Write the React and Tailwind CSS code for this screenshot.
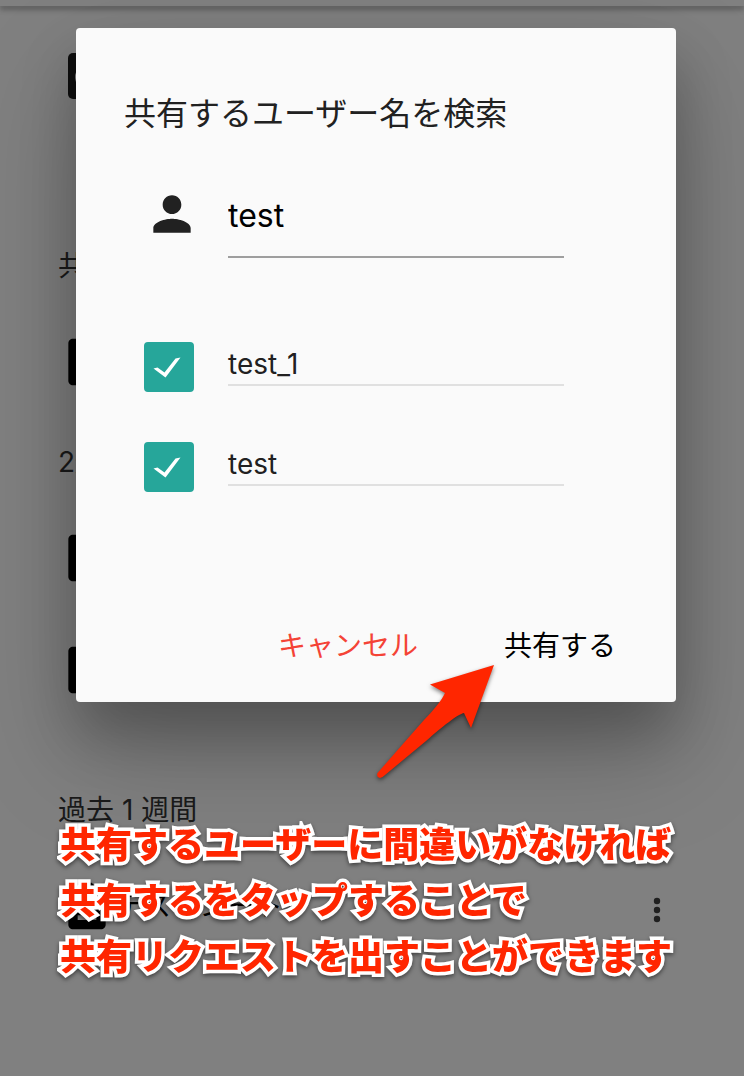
import React from "react";

function FileIcon({ variant }) {
  if (variant === "disc") {
    return (
      <svg viewBox="0 0 56 56" className="size-14 shrink-0" aria-hidden="true">
        <rect x="9" y="5" width="38" height="46" rx="5" fill="#0e0e0e" />
        <circle cx="28" cy="29" r="12" fill="#808080" />
      </svg>
    );
  }
  return (
    <svg viewBox="0 0 24 24" className="size-14 shrink-0" fill="#000" aria-hidden="true">
      <path d="M14 2H6c-1.100 0-1.990.9-1.990 2L4 20c0 1.100.89 2 1.990 2H18c1.100 0 2-.9 2-2V8l-6-6zm2 16H8v-2h8v2zm0-4H8v-2h8v2zm-3-5V3.500L18.500 9H13z" />
    </svg>
  );
}

function Row({ name, variant }) {
  return (
    <li className="flex h-28 items-center pr-[71px] pl-[59px]">
      <FileIcon variant={variant} />
      <span className="grow text-black">{name}</span>
      {name && (
        <button type="button" aria-label="メニュー" className="flex w-8 justify-center pt-2">
          <svg viewBox="0 0 8 28" className="h-7 w-2" fill="#1f1f1f">
            <circle cx="4" cy="5" r="3.2" />
            <circle cx="4" cy="14" r="3.2" />
            <circle cx="4" cy="23" r="3.2" />
          </svg>
        </button>
      )}
    </li>
  );
}

function Section({ title, rows, variant, className }) {
  return (
    <section className={className}>
      {title && <h2 className="flex h-20 items-center pl-[58px]">{title}</h2>}
      <ul>
        {rows.map((name, i) => (
          <Row key={i} name={name} variant={variant} />
        ))}
      </ul>
    </section>
  );
}

function UserOption({ id, name }) {
  return (
    <li className="flex h-[100px] items-center">
      <span className="relative ml-5 size-[50px] shrink-0">
        <input
          id={id}
          type="checkbox"
          defaultChecked
          className="block size-full appearance-none rounded-[4px] border-2 border-[#757575] checked:border-[#26a69a] checked:bg-[#26a69a]"
        />
        <svg viewBox="0 0 50 50" className="pointer-events-none absolute inset-0 size-full" aria-hidden="true">
          <path d="M9.500 26.500 L13.500 25.500 L20.500 30.500 L31.500 16.500 L36.500 15.500 L21.500 35.500Z" fill="#fff" />
        </svg>
      </span>
      <label htmlFor={id} className="ml-[34px] grow border-b-2 border-[#e0e0e0] pb-1 text-[28px] leading-8 text-[#212121]">
        {name}
      </label>
    </li>
  );
}

function ShareDialog() {
  return (
    <div
      role="dialog"
      aria-modal="true"
      aria-labelledby="share-title"
      className="absolute top-7 right-[68px] left-[76px] rounded-[4px] bg-[#fafafa] shadow-[0_32px_56px_0_rgba(0,0,0,0.22),0_50px_110px_0_rgba(0,0,0,0.21)]"
    >
      <div className="pt-[62px] pr-28 pl-12">
        <h1 id="share-title" className="text-[32px] leading-12 whitespace-nowrap text-[#212121]">
          共有するユーザー名を検索
        </h1>
        <div className="mt-8 flex h-[88px] items-center">
          <svg viewBox="0 0 24 24" className="ml-5 size-14 shrink-0 text-[#212121]" fill="currentColor" aria-hidden="true">
            <path d="M12 12c2.210 0 4-1.790 4-4s-1.790-4-4-4-4 1.790-4 4 1.790 4 4 4zm0 2c-2.670 0-8 1.340-8 4v2h16v-2c0-2.660-5.330-4-8-4z" />
          </svg>
          <input
            type="text"
            defaultValue="test"
            aria-label="ユーザー名"
            className="ml-7 h-full min-w-0 grow border-b-2 border-[#9e9e9e] bg-transparent pt-1 text-[32px] text-black outline-none"
          />
        </div>
        <ul className="mt-[59px]">
          <UserOption id="user-1" name="test_1" />
          <UserOption id="user-2" name="test" />
        </ul>
      </div>
      <div className="mt-[72px] flex h-[113px] items-center justify-end gap-[86px] pr-[60px] text-[28px] leading-12">
        <button type="button" className="text-[#f44336]">キャンセル</button>
        <button type="button" className="text-black">共有する</button>
      </div>
    </div>
  );
}

const captions = [
  "共有するユーザーに間違いがなければ",
  "共有するをタップすることで",
  "共有リクエストを出すことができます",
];

export default function App() {
  return (
    <div className="relative min-h-screen overflow-hidden bg-[#808080] font-[Inter,'Noto_Sans_CJK_JP',sans-serif] text-[28px] text-[#1a1a1a]">
      <header className="h-[6px] bg-[#808080] shadow-[0_4px_5px_rgba(0,0,0,0.2),0_1px_10px_rgba(0,0,0,0.16)]" />
      <main>
        <Section className="mt-[14px]" rows={[""]} variant="disc" />
        <Section className="mt-[94px]" title="共有" rows={[""]} />
        <Section className="mt-1" title="2週間" rows={["", ""]} />
        <Section className="mt-11" title="過去 1 週間" rows={["テストシート"]} />
      </main>

      <ShareDialog />

      <svg viewBox="0 0 130 124" className="pointer-events-none absolute top-[662px] left-[370px] h-[124px] w-[130px] drop-shadow-[0_2px_2px_rgba(0,0,0,0.5)]" aria-hidden="true">
        <path d="M124 3 L60 22.500 L75 31 C72 38 63 49 54 58 L7.500 111 Q6 115 10 116 Q12 116 15 113 L56 79 C72 65 88 52 94 51 L101 66Z" fill="#ff2600" />
      </svg>

      <div className="pointer-events-none absolute top-[817px] left-[60px] text-[36px] leading-14 font-black whitespace-nowrap text-[#ff2600] [paint-order:stroke_fill] [stroke-linejoin:round] [-webkit-text-stroke:7px_white] drop-shadow-[0_2px_2px_rgba(0,0,0,0.5)]">
        {captions.map((line) => (
          <p key={line}>{line}</p>
        ))}
      </div>
    </div>
  );
}
